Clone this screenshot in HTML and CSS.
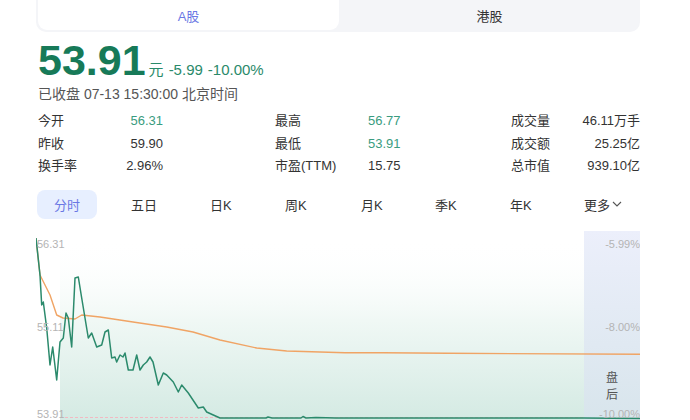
FILE: index.html
```html
<!DOCTYPE html>
<html lang="zh">
<head>
<meta charset="utf-8">
<link rel="stylesheet" href="styles.css">
</head>
<body>
<div class="page">
  <div class="market-tabs">
    <div class="mtab active">A股</div>
    <div class="mtab">港股</div>
  </div>

  <div class="quote">
    <span class="price">53.91</span>
    <span class="unit">元</span>
    <span class="chg">-5.99</span>
    <span class="chg">-10.00%</span>
  </div>
  <div class="status">已收盘 07-13 15:30:00 北京时间</div>

  <div class="stats">
    <span class="lbl">今开</span><span class="val r up">56.31</span><span></span>
    <span class="lbl">最高</span><span class="val up">56.77</span>
    <span class="lbl">成交量</span><span class="val r">46.11万手</span>

    <span class="lbl">昨收</span><span class="val r">59.90</span><span></span>
    <span class="lbl">最低</span><span class="val up">53.91</span>
    <span class="lbl">成交额</span><span class="val r">25.25亿</span>

    <span class="lbl">换手率</span><span class="val r">2.96%</span><span></span>
    <span class="lbl">市盈(TTM)</span><span class="val">15.75</span>
    <span class="lbl">总市值</span><span class="val r">939.10亿</span>
  </div>

  <div class="periods">
    <div class="period active">分时</div>
    <div class="period">五日</div>
    <div class="period">日K</div>
    <div class="period">周K</div>
    <div class="period">月K</div>
    <div class="period">季K</div>
    <div class="period">年K</div>
    <div class="period more">更多<svg class="caret" width="10" height="6" viewBox="0 0 10 6"><path d="M1 1l4 4 4-4" fill="none" stroke="#555" stroke-width="1.1"/></svg></div>
  </div>

  <div class="chart">
    <svg width="604" height="189" viewBox="0 0 604 189">
      <defs>
        <linearGradient id="fill" x1="0" y1="0" x2="0" y2="1">
          <stop offset="0" stop-color="#ffffff" stop-opacity="0"/>
          <stop offset="0.45" stop-color="#f0f8f5"/>
          <stop offset="1" stop-color="#d4eae3"/>
        </linearGradient>
        <linearGradient id="after" x1="0" y1="0" x2="0" y2="1">
          <stop offset="0" stop-color="#eceffb"/>
          <stop offset="1" stop-color="#d8e5ec"/>
        </linearGradient>
      </defs>
      <rect x="24" y="8" width="524" height="181" fill="url(#fill)"/>
      <rect x="548" y="0" width="56" height="189" fill="url(#after)"/>
      <line x1="24" y1="186.5" x2="548" y2="186.5" stroke="#f2b9c2" stroke-width="1" stroke-dasharray="3 2"/>
      <polyline fill="none" stroke="#f0a465" stroke-width="1.4" stroke-linejoin="round"
        points="0,7 4,44 14,64 20.7,84 27,87 39,88 45.7,84 64,86 97,91 130.7,96 157,101 184,109 220.7,117 250.7,120 309,121.7 347,121.7 412,122.3 604,123.3"/>
      <polyline fill="none" stroke="#2b8a6c" stroke-width="1.5" stroke-linejoin="round"
        points="0,7 4,44 5.7,74 7.3,71 10.7,97 14,134 16.7,116 20.7,149 24,111 27.3,107 30,82 32.3,87 35.7,116 39,47 42.3,46 45.7,67 52.3,107 55.7,102 60.7,116 65.7,114 69,101 72.3,99 75.7,127 79,126 80.7,131 84,124 87,126 89,122 92.3,139 97,139 100.7,124 104,139 107.3,134 110.7,131 114,126 117,131 122.3,154 127.3,142 130.7,144 137.3,151 142.3,161 145.7,154 152.3,162 162.3,177 167.3,176 170.7,181 177.3,184 184,187 230,187 232,186 236,187 265,187 267,185.5 270,187 280,186.5 300,187 548,187 604,187.5"/>
      <text class="axis" x="1" y="17">56.31</text>
      <text class="axis" x="1" y="100">55.11</text>
      <text class="axis" x="1" y="187">53.91</text>
      <text class="axis" x="604" y="17" text-anchor="end">-5.99%</text>
      <text class="axis" x="604" y="100" text-anchor="end">-8.00%</text>
      <text class="axis" x="604" y="187" text-anchor="end">-10.00%</text>
      <text class="after-txt" x="576" y="151" text-anchor="middle">盘</text>
      <text class="after-txt" x="576" y="168" text-anchor="middle">后</text>
    </svg>
  </div>
</div>
</body>
</html>
```

FILE: styles.css
```css
* { box-sizing: border-box; }
html, body { margin: 0; padding: 0; background: #fff; }
body {
  font-family: "Liberation Sans", "Noto Sans CJK SC", sans-serif;
  color: #333;
  width: 690px;
  height: 420px;
  overflow: hidden;
}
.page {
  width: 604px;
  margin-left: 36px;
}
.market-tabs {
  display: flex;
  height: 32px;
  background: #f4f5f8;
  border-radius: 0 0 10px 10px;
  padding: 0 0 2px 2px;
}
.mtab {
  flex: 1;
  display: flex;
  align-items: center;
  justify-content: center;
  font-size: 13px;
  color: #333;
}
.mtab.active {
  background: #fff;
  color: #6a78e4;
  border-radius: 0 0 9px 9px;
}
.quote {
  display: flex;
  align-items: baseline;
  margin-top: 8px;
  padding-left: 2px;
  height: 40px;
}
.price {
  font-size: 43px;
  font-weight: bold;
  color: #177a58;
  line-height: 40px;
}
.unit {
  font-size: 15px;
  color: #2a8a6a;
  margin-left: 3px;
}
.chg {
  font-size: 15px;
  color: #2a8a6a;
  margin-left: 5px;
}
.status {
  font-size: 14px;
  color: #555;
  padding-left: 2px;
  margin-top: 5px;
  line-height: 18px;
}
.stats {
  display: grid;
  grid-template-columns: 80px 45px 112px 93px 143px 1fr auto;
  padding-left: 2px;
  margin-top: 7px;
  font-size: 13px;
  line-height: 22.5px;
}
.lbl { color: #333; }
.val { color: #333; }
.val.r { text-align: right; }
.val.up { color: #3a9c80; }
.periods {
  display: grid;
  grid-template-columns: 78px 79px 75px 76px 74px 75px 74px auto;
  margin-top: 12px;
  height: 29px;
  padding-left: 1px;
}
.period {
  display: flex;
  align-items: center;
  font-size: 13px;
  color: #333;
  padding-left: 16px;
}
.period.active {
  width: 60px;
  justify-content: center;
  padding-left: 0;
  background: #e7efff;
  color: #6a78e4;
  border-radius: 8px;
}
.caret { margin-left: 2px; }
.chart {
  margin-top: 12px;
  height: 189px;
}
.chart svg { display: block; }
.axis {
  font-family: "Liberation Sans", sans-serif;
  font-size: 11px;
  fill: #b4b4b4;
}
.after-txt {
  font-family: "Noto Sans CJK SC", sans-serif;
  font-size: 12px;
  fill: #555;
}
```
